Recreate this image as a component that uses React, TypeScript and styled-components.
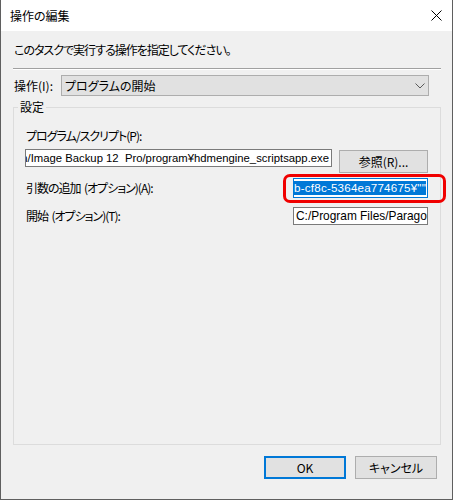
import React from "react";
import styled, { createGlobalStyle } from "styled-components";

const GlobalStyle = createGlobalStyle`
  html, body { margin: 0; padding: 0; background: #ffffff; }
  body {
    font-family: "Noto Sans CJK JP", "Noto Sans", sans-serif;
    font-size: 12px;
    color: #000;
    font-feature-settings: "palt";
  }
  * { box-sizing: border-box; }
`;

const Window = styled.div`
  width: 453px;
  height: 500px;
  display: flex;
  flex-direction: column;
  border: 1px solid #5f5f5f;
  border-top: none;
  background: #f0f0f0;
`;

const TitleBar = styled.div`
  height: 31px;
  flex-shrink: 0;
  background: #ffffff;
  display: flex;
  align-items: center;
  justify-content: space-between;
  padding: 0 10px 0 9px;
`;

const Title = styled.span`
  font-size: 12px;
  line-height: 16px;
`;

const Body = styled.div`
  flex: 1;
  display: flex;
  flex-direction: column;
  padding: 11px 11px 20px 12px;
  min-height: 0;
`;

const Text = styled.div`
  line-height: 16px;
  margin-left: 1px;
  white-space: pre;
  letter-spacing: -1px;
`;

const Separator = styled.div`
  margin-top: 10px;
  height: 2px;
  border-top: 1px solid #a0a0a0;
  border-bottom: 1px solid #ffffff;
`;

const ComboRow = styled.div`
  margin-top: 5px;
  display: flex;
  align-items: center;
  height: 21px;
`;

const ComboLabel = styled.span`
  width: 48px;
  padding-left: 1px;
  line-height: 16px;
  white-space: nowrap;
`;

const Combo = styled.div`
  width: 368px;
  height: 21px;
  background: #e1e1e1;
  border: 1px solid #adadad;
  display: flex;
  align-items: center;
  justify-content: space-between;
  padding: 0 3px 0 3px;
  line-height: 16px;
`;

const Group = styled.fieldset`
  margin: 3px 0 0 0;
  padding: 13px 12px 0 11px;
  border: 1px solid #dcdcdc;
  flex: 1;
  min-width: 0;
  display: flex;
  flex-direction: column;
`;

const Legend = styled.legend`
  padding: 0 2px;
  margin-left: -7px;
  line-height: 16px;
`;

const FieldRow = styled.div<{ $gap: number; $h: number }>`
  margin-top: ${(p) => p.$gap}px;
  display: flex;
  align-items: center;
  justify-content: space-between;
  height: ${(p) => p.$h}px;
`;

const ProgramRow = styled.div`
  margin-top: 5px;
  display: flex;
  align-items: flex-start;
  gap: 7px;
`;

const TextBox = styled.div<{ $w: number; $right?: boolean; $size: number }>`
  width: ${(p) => p.$w}px;
  height: 18px;
  background: #ffffff;
  border: 1px solid #7a7a7a;
  padding: 0 2px;
  display: flex;
  align-items: center;
  justify-content: ${(p) => (p.$right ? "flex-end" : "flex-start")};
  overflow: hidden;
  white-space: pre;
  line-height: 16px;
  font-family: "Liberation Sans", Arial, sans-serif;
  font-size: ${(p) => p.$size}px;
`;

const FocusWrap = styled.div`
  position: relative;
  width: 135px;
  height: 20px;
`;

const FocusBox = styled.div`
  width: 135px;
  height: 20px;
  background: #ffffff;
  border: 1px solid #0078d7;
  padding: 2px 1px 2px 1px;
  display: flex;
  justify-content: flex-end;
  overflow: hidden;
`;

const Selection = styled.span`
  background: #0078d7;
  color: #ffffff;
  white-space: pre;
  line-height: 14px;
  height: 14px;
  display: flex;
  align-items: center;
  font-family: "Liberation Sans", Arial, sans-serif;
  font-size: 11.6px;
  letter-spacing: 0.2px;
`;

const Highlight = styled.div`
  position: absolute;
  left: -10px;
  top: -4px;
  right: -18px;
  bottom: -5px;
  border: 3px solid #f00000;
  border-radius: 7px;
  pointer-events: none;
`;

const Button = styled.button<{ $default?: boolean; $w: number }>`
  width: ${(p) => p.$w}px;
  height: 23px;
  background: #e1e1e1;
  border: ${(p) => (p.$default ? "2px solid #0078d7" : "1px solid #adadad")};
  font-family: inherit;
  font-size: 12px;
  color: #000;
  padding: 0;
  line-height: 16px;
  font-feature-settings: "palt";
`;

const BrowseButton = styled(Button)`
  margin-top: 1px;
`;

const Footer = styled.div`
  margin-top: 11px;
  display: flex;
  justify-content: flex-end;
  gap: 9px;
  padding-right: 4px;
`;

const CloseIcon = () => (
  <svg width="11" height="11" viewBox="0 0 11 11">
    <path d="M0.5 0.5 L10.5 10.5 M10.5 0.5 L0.5 10.5" stroke="#000" strokeWidth="1" />
  </svg>
);

const Chevron = () => (
  <svg width="10" height="6" viewBox="0 0 10 6">
    <path d="M0.5 0.5 L5 5 L9.5 0.5" stroke="#5a5a5a" strokeWidth="1" fill="none" />
  </svg>
);

export default function App() {
  return (
    <>
      <GlobalStyle />
      <Window>
        <TitleBar>
          <Title>操作の編集</Title>
          <CloseIcon />
        </TitleBar>
        <Body>
          <Text>このタスクで実行する操作を指定してください。</Text>
          <Separator />
          <ComboRow>
            <ComboLabel>操作(I):</ComboLabel>
            <Combo>
              <span>プログラムの開始</span>
              <Chevron />
            </Combo>
          </ComboRow>
          <Group>
            <Legend>設定</Legend>
            <Text>プログラム/スクリプト(P):</Text>
            <ProgramRow>
              <TextBox $w={307} $right $size={11.3}>
                {"n/Image Backup 12  Pro/program¥hdmengine_scriptsapp.exe"}
              </TextBox>
              <BrowseButton $w={89}>参照(R)...</BrowseButton>
            </ProgramRow>
            <FieldRow $gap={5} $h={20}>
              <Text>{"引数の追加  (オプション)(A):"}</Text>
              <FocusWrap>
                <FocusBox>
                  <Selection>{"3f5b-cf8c-5364ea774675¥\"\""}</Selection>
                </FocusBox>
                <Highlight />
              </FocusWrap>
            </FieldRow>
            <FieldRow $gap={9} $h={18}>
              <Text>{"開始  (オプション)(T):"}</Text>
              <TextBox $w={135} $size={11.9}>{"C:/Program Files/Paragon"}</TextBox>
            </FieldRow>
          </Group>
          <Footer>
            <Button $default $w={82}>OK</Button>
            <Button $w={82}>キャンセル</Button>
          </Footer>
        </Body>
      </Window>
    </>
  );
}
